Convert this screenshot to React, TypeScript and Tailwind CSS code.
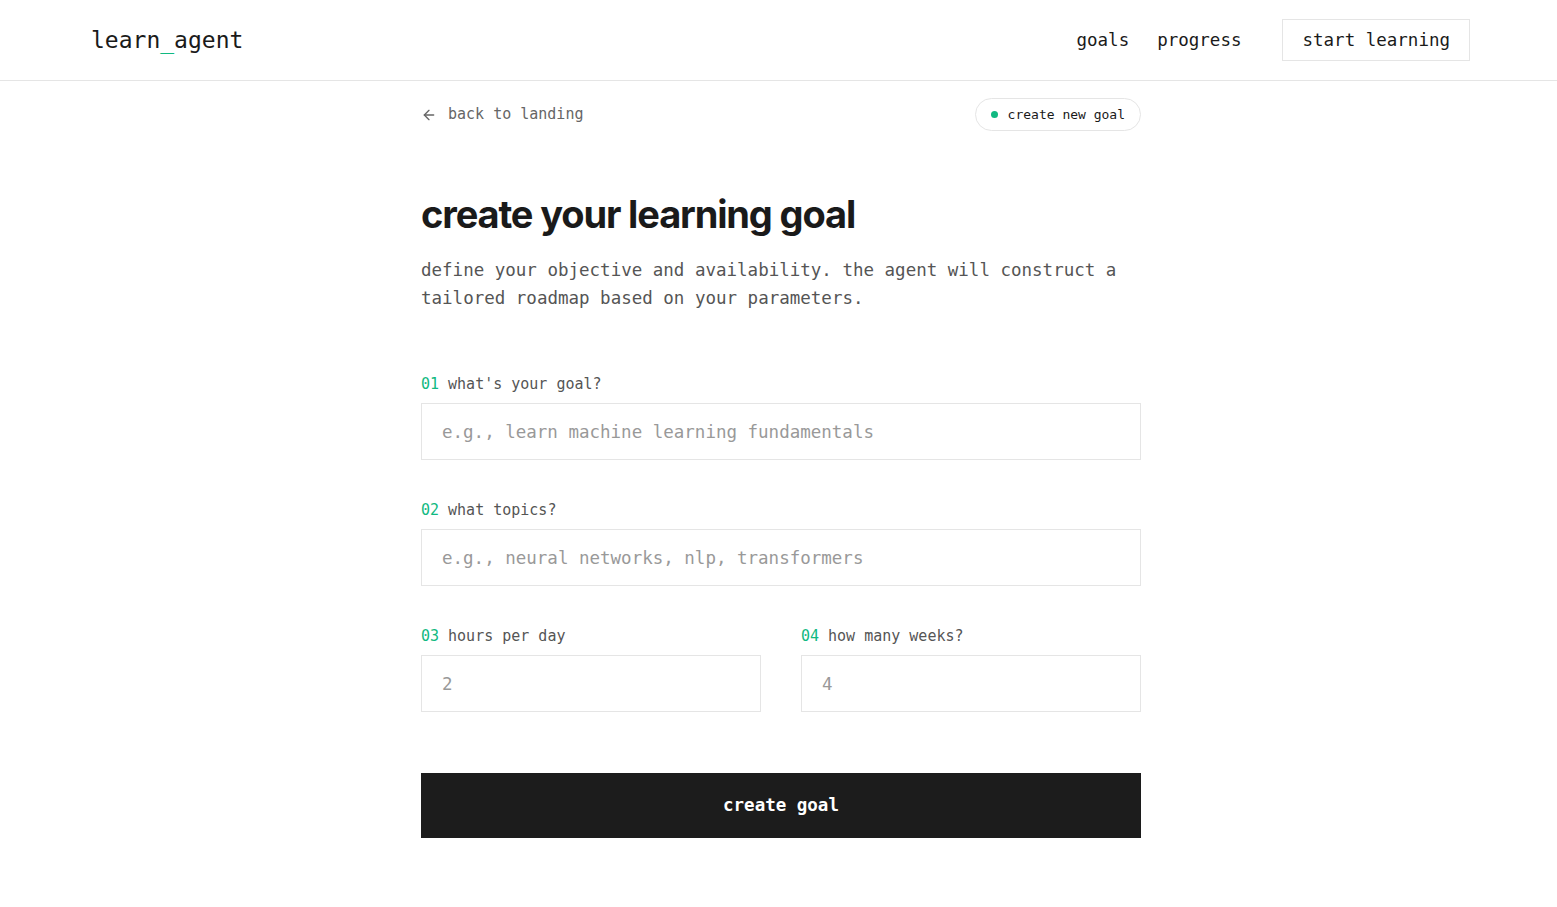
import { useState } from 'react'

const mono = "font-['DejaVu_Sans_Mono','Liberation_Mono',monospace]"

function Field({
  num,
  label,
  placeholder,
}: {
  num: string
  label: string
  placeholder: string
}) {
  const [value, setValue] = useState('')
  return (
    <div className="flex flex-col">
      <label className="text-[15px] text-[#555] leading-5 mb-[9px]">
        <span className="text-[#10b981] mr-[9px]">{num}</span>
        {label}
      </label>
      <input
        value={value}
        onChange={(e) => setValue(e.target.value)}
        placeholder={placeholder}
        className={`${mono} h-[57px] w-full border border-[#e5e5e5] px-5 text-[17.5px] text-[#1a1a1a] placeholder:text-[#999] outline-none`}
      />
    </div>
  )
}

export default function App() {
  return (
    <div className={`min-h-screen bg-white text-[#1a1a1a] ${mono}`}>
      {/* top navigation */}
      <header className="h-[81px] border-b border-[#e5e5e5] flex items-center justify-between pl-[91px] pr-[87px]">
        <div className="text-[23px] leading-[32px]">
          learn<span className="text-[#10b981]">_</span>agent
        </div>
        <nav className="flex items-center text-[17.5px]">
          <a href="#" className="mr-[28px]">goals</a>
          <a href="#" className="mr-[41px]">progress</a>
          <button className="h-[42px] px-[19px] border border-[#e5e5e5] text-[17.5px]">
            start learning
          </button>
        </nav>
      </header>

      <main className="w-[725px] pl-[5px] mx-auto">
        <div className="flex items-center justify-between mt-[17px] h-[33px]">
          <a href="#" className="flex items-center gap-[11px] text-[15px] text-[#666]">
            <svg width="16" height="16" viewBox="0 0 24 24" fill="none" stroke="currentColor" strokeWidth="2" strokeLinecap="round" strokeLinejoin="round">
              <path d="M19 12H5" />
              <path d="M12 19l-7-7 7-7" />
            </svg>
            back to landing
          </a>
          <div className="h-[33px] flex items-center gap-[10px] rounded-full border border-[#e5e5e5] px-[15px] text-[13px]">
            <span className="w-[7px] h-[7px] rounded-full bg-[#10b981]" />
            create new goal
          </div>
        </div>

        <h1 className="mt-[61px] font-['Inter',sans-serif] font-bold text-[38px] leading-[44px] tracking-[-0.03em] text-[#1a1a1a]">
          create your learning goal
        </h1>
        <p className="mt-5 text-[17.5px] leading-7 text-[#555]">
          define your objective and availability. the agent will construct a tailored roadmap based on your parameters.
        </p>

        <form className="mt-[62px] flex flex-col gap-10" onSubmit={(e) => e.preventDefault()}>
          <Field num="01" label="what's your goal?" placeholder="e.g., learn machine learning fundamentals" />
          <Field num="02" label="what topics?" placeholder="e.g., neural networks, nlp, transformers" />
          <div className="grid grid-cols-2 gap-10">
            <Field num="03" label="hours per day" placeholder="2" />
            <Field num="04" label="how many weeks?" placeholder="4" />
          </div>
          <button
            type="submit"
            className="mt-[21px] h-[65px] w-full bg-[#1c1c1c] text-white font-bold text-[17.5px]"
          >
            create goal
          </button>
        </form>
      </main>
    </div>
  )
}
